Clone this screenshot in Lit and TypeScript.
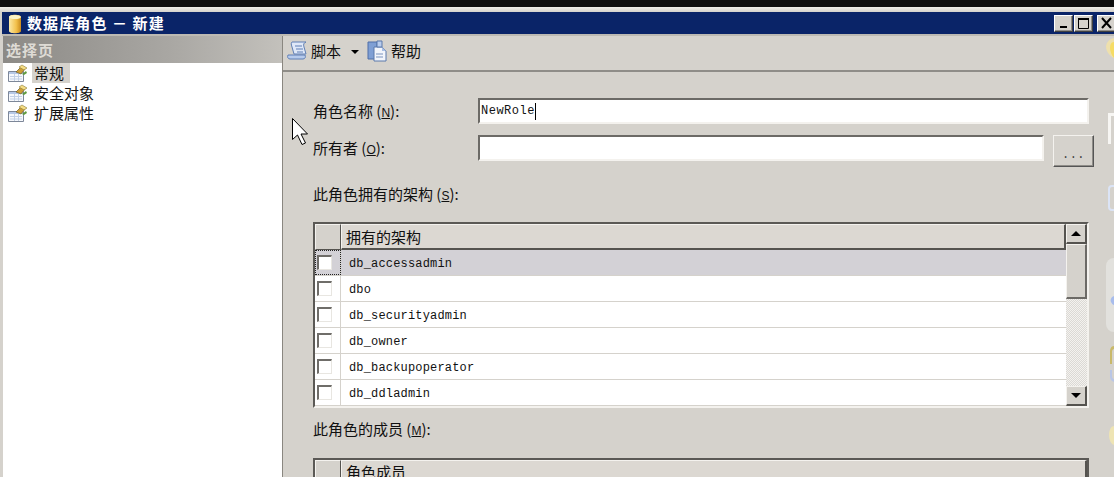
import { LitElement, html, css } from "lit";
import { customElement } from "lit/decorators.js";

const pageIcon = html`<svg class="pico" width="21" height="19" viewBox="0 0 21 19">
  <path d="M1.500 7.500h15v10h-15z" fill="#f6f8fc" stroke="#7d8798"/>
  <path d="M2 8h14v2H2z" fill="#b6c8e6"/>
  <path d="M3 12.500h12M3 15h12M7.500 10v7M11.500 10v7" stroke="#c3d1e6" fill="none"/>
  <path d="M9 8l5-5 4 2-4 5z" fill="#cf9f35" stroke="#6f5e28" stroke-width=".7"/>
  <path d="M12 3l3-2 5 3-3 2z" fill="#f4dc85" stroke="#8c7a35" stroke-width=".6"/>
  <path d="M15 10l4-3 1 2-3 2z" fill="#5f9b3f"/>
</svg>`;

const schemas = ["db_accessadmin", "dbo", "db_securityadmin", "db_owner", "db_backupoperator", "db_ddladmin"];

@customElement("app-root")
export class AppRoot extends LitElement {
  static styles = css`
    :host { display: block; width: 1114px; height: 477px; overflow: hidden; position: relative; background: #d5d2cc;
      font-family: "Noto Sans CJK SC", "Liberation Sans", sans-serif; font-size: 15px; color: #111; }
    .black { height: 7px; background: #0f0f0f; }
    .frame { height: 5px; background: linear-gradient(#f0eee9, #d5d2cc); }
    .title { height: 22px; margin-left: 2px; background: #0a2468; color: #fff; font-weight: 700; display: flex; align-items: center; font-size: 15px; gap: 4px; padding-left: 5px; }
    .title .t { flex: 1; white-space: pre; line-height: 22px; letter-spacing: 1.1px; }
    .winbtns { display: flex; }
    .wb { width: 19px; height: 17px; box-sizing: border-box; background: #d5d2cc; border: 1px solid; border-color: #fff #404040 #404040 #fff; box-shadow: inset -1px -1px 0 #8f8d88; display: flex; align-items: center; justify-content: center; margin-right: 1px; }
    .wb.x { margin-left: 3px; margin-right: -2px; }
    .rule { height: 2px; background: #bdbab3; margin-left: 2px; }
    .main { display: flex; height: 441px; }
    .left { width: 283px; flex: none; background: #fff; box-sizing: border-box; border-left: 3px solid #d5d2cc; border-right: 1px solid #8a8780; display: flex; flex-direction: column; }
    .lhead { height: 27px; flex: none; background: linear-gradient(90deg, #8c8a86, #a9a7a3 60%, #c3c1bc); color: #dedbd5; font-weight: 700; display: flex; align-items: center; padding-left: 3px; font-size: 15px; letter-spacing: 1px; }
    .pages { display: flex; flex-direction: column; }
    .pg { display: flex; align-items: center; height: 20px; padding-left: 4px; gap: 5px; line-height: 20px; font-size: 15px; }
    .pg span { padding: 0 6px 0 2px; margin-left: -1px; }
    .pg.sel span { background: #d5d2cc; }
    .right { flex: 1; min-width: 0; display: flex; flex-direction: column; }
    .tb { height: 36px; flex: none; box-sizing: border-box; border-bottom: 2px solid #8f8d88; padding-bottom: 5px; display: flex; align-items: center; padding-left: 4px; font-size: 15px; }
    .tb .ic { display: flex; align-items: center; gap: 3px; }
    .caret { width: 0; height: 0; border: 4px solid transparent; border-top: 4px solid #000; border-bottom: 0; margin: 2px 8px 0 10px; }
    .form { padding: 26px 20px 0 30px; flex: none; }
    .row { display: flex; align-items: flex-start; height: 26px; }
    .row label { width: 165px; flex: none; line-height: 26px; white-space: pre; }
    .u { text-decoration: underline; font-family: "Liberation Sans", sans-serif; font-size: 12px; }
    .inp { height: 26px; box-sizing: border-box; background: #fff; border: 2px solid; border-color: #6c6a66 #f4f2ee #f4f2ee #6c6a66; font-family: "Liberation Mono", monospace; font-size: 12px; letter-spacing: .5px; padding-left: 1px; display: flex; align-items: center; }
    .inp i { display: inline-block; width: 1px; height: 17px; background: #000; }
    .r1 .inp { width: 611px; }
    .r2 { margin-top: 11px; }
    .r2 .inp { width: 566px; }
    .dots { width: 41px; height: 32px; flex: none; box-sizing: border-box; margin-left: 9px; background: #d5d2cc; border: 1px solid; border-color: #f4f2ee #555 #555 #f4f2ee; box-shadow: inset -1px -1px 0 #8f8d88; text-align: center; font: 12px/38px "Liberation Mono", monospace; letter-spacing: .4px; color: #444; }
    .sec { margin-top: 20px; line-height: 26px; height: 26px; white-space: pre; }
    .grid { margin-top: 15px; width: 776px; box-sizing: border-box; border: 2px solid; border-color: #5b5955 #f4f2ee #f4f2ee #5b5955; display: flex; }
    .gmain { flex: 1; min-width: 0; }
    .ghead { display: flex; height: 26px; box-sizing: border-box; }
    .hc { box-sizing: border-box; border: 1px solid; border-color: #f4f2ee #55534f #55534f #f4f2ee; background: #d5d2cc; line-height: 23px; font-size: 15px; overflow: hidden; }
    .hc.a { width: 26px; flex: none; }
    .hc.b { flex: 1; padding-left: 4px; background: #dcd8d2; border-width: 1px 2px 2px 1px; }
    .grow { display: flex; height: 26px; box-sizing: border-box; background: #fff; border-bottom: 1px solid #d5d2cc; }
    .grow.sel { background: #d3d1d6; }
    .cc { width: 26px; flex: none; box-sizing: border-box; border-right: 1px solid #d5d2cc; display: flex; align-items: center; padding-left: 2px; }
    .grow.sel .cc { outline: 1px dotted #222; outline-offset: -1px; }
    .cb { width: 15px; height: 15px; box-sizing: border-box; background: #fff; border: 1px solid; border-width: 2px 1px 1px 2px; border-color: #6f6d69 #e8e6e1 #e8e6e1 #6f6d69; }
    .cn { font: 12px/28px "Liberation Mono", monospace; letter-spacing: .17px; padding-left: 8px; }
    .sb { width: 21px; flex: none; display: flex; flex-direction: column; background: repeating-conic-gradient(#dbd9d5 0 25%, #f4f2ef 0 50%) 0 0 / 2px 2px; }
    .sbtn { width: 21px; height: 20px; flex: none; box-sizing: border-box; background: #d5d2cc; border: 1px solid; border-width: 1px 2px 2px 1px; border-color: #f4f2ee #55534f #55534f #f4f2ee; display: flex; align-items: center; justify-content: center; }
    .thumb { width: 21px; height: 55px; flex: none; box-sizing: border-box; background: #d5d2cc; border: 1px solid; border-width: 1px 2px 2px 1px; border-color: #f4f2ee #6c6a66 #6c6a66 #f4f2ee; }
    .sp { flex: 1; }
    .up { width: 0; height: 0; border: 5px solid transparent; border-bottom: 5px solid #000; border-top: 0; }
    .dn { width: 0; height: 0; border: 5px solid transparent; border-top: 5px solid #000; border-bottom: 0; }
    .sec2 { margin-top: 8px; }
    .grid2 { margin-top: 16px; border-bottom: 0; border-right-color: #5b5955; }
    .grid2 .hc { line-height: 21px; }
    .cursor { position: absolute; left: 292px; top: 118px; }
    .edge { position: absolute; left: 1096px; top: 34px; }
  `;

  render() {
    return html`
      <div class="black"></div>
      <div class="frame"></div>
      <div class="title">
        <svg width="16" height="21" viewBox="0 0 16 21">
          <defs><linearGradient id="g" x1="0" x2="1"><stop offset="0" stop-color="#fbe9a8"/><stop offset=".6" stop-color="#f3c14c"/><stop offset="1" stop-color="#c98a1c"/></linearGradient></defs>
          <path d="M2 4c0-3 12-3 12 0v14c0 3-12 3-12 0z" fill="url(#g)"/>
          <ellipse cx="8" cy="4" rx="6" ry="2" fill="#fdf3c6"/>
        </svg>
        <span class="t">数据库角色 － 新建</span>
        <div class="winbtns">
          <div class="wb"><svg width="11" height="11" viewBox="0 0 11 11"><path d="M2 8h7v2H2z"/></svg></div>
          <div class="wb"><svg width="13" height="13" viewBox="0 0 13 13"><path d="M1.500 2.500h10v9h-10z" fill="none" stroke="#000"/><path d="M1 1h11v2H1z"/></svg></div>
          <div class="wb x"><svg width="13" height="12" viewBox="0 0 13 12"><path d="M2 1l9 10M11 1L2 11" stroke="#000" stroke-width="2"/></svg></div>
        </div>
      </div>
      <div class="rule"></div>
      <div class="main">
        <div class="left">
          <div class="lhead">选择页</div>
          <div class="pages">
            <div class="pg sel">${pageIcon}<span>常规</span></div>
            <div class="pg">${pageIcon}<span>安全对象</span></div>
            <div class="pg">${pageIcon}<span>扩展属性</span></div>
          </div>
        </div>
        <div class="right">
          <div class="tb">
            <span class="ic">
              <svg width="21" height="21" viewBox="0 0 21 21"><path d="M5 2h14c-2 1-3 2-2 5l2 7H7L5 7C4 4 4 3 5 2z" fill="#dfe8f8" stroke="#5f7fb5"/><path d="M1 15h17c1 2 0 4-2 4H3c-2 0-3-2-2-4z" fill="#b7cbec" stroke="#5f7fb5"/><path d="M8 6h7M9 9h7M10 12h6" stroke="#5f7fb5"/></svg>
              脚本
            </span>
            <span class="caret"></span>
            <span class="ic">
              <svg width="21" height="22" viewBox="0 0 21 22"><path d="M1 2h9v17H1z" fill="#7f9fd4" stroke="#4f6fa8"/><path d="M7 7h8l4 4v10H7z" fill="#f2f5fb" stroke="#5a78ab"/><path d="M15 7v4h4z" fill="#a9bfe3"/><path d="M10 1h5v6h-5z" fill="#b9cdee" stroke="#5a78ab"/><path d="M9 14h7M9 17h7" stroke="#7b93bd"/></svg>
              帮助
            </span>
          </div>
          <div class="form">
            <div class="row r1"><label>角色名称 (<span class="u">N</span>):</label><div class="inp">NewRole<i></i></div></div>
            <div class="row r2"><label>所有者 (<span class="u">O</span>):</label><div class="inp"></div><div class="dots">...</div></div>
            <div class="sec">此角色拥有的架构 (<span class="u">S</span>):</div>
            <div class="grid">
              <div class="gmain">
                <div class="ghead"><div class="hc a"></div><div class="hc b">拥有的架构</div></div>
                ${schemas.map((s, i) => html`<div class="grow ${i === 0 ? "sel" : ""}"><div class="cc"><div class="cb"></div></div><div class="cn">${s}</div></div>`)}
              </div>
              <div class="sb">
                <div class="sbtn"><div class="up"></div></div>
                <div class="thumb"></div>
                <div class="sp"></div>
                <div class="sbtn"><div class="dn"></div></div>
              </div>
            </div>
            <div class="sec sec2">此角色的成员 (<span class="u">M</span>):</div>
            <div class="grid grid2">
              <div class="gmain"><div class="ghead"><div class="hc a"></div><div class="hc b">角色成员</div></div></div>
            </div>
          </div>
        </div>
      </div>
      <svg class="cursor" width="16" height="29" viewBox="0 0 16 29"><path d="M.5.500v21l5-4.500 4.500 9.500 3.500-1.500-4.500-9h6.500z" fill="#fff" stroke="#000"/></svg>
      <svg class="edge" width="18" height="443" viewBox="0 0 18 443">
        <path d="M18 4a10 10 0 0 0-8 8c0 6 4 10 8 12z" fill="#eee0ac"/>
        <path d="M18 8c-3 0-4 3-4 6 0 3 2 8 4 10z" fill="#f6dc64"/>
        <path d="M12 79h6v3h-3v28h-3z" fill="#f7f6f3"/>
        <rect x="13" y="152" width="8" height="24" rx="3" fill="none" stroke="#dbe4f6" stroke-width="2"/>
        <path d="M18 224a8 8 0 0 0-8 8v58a8 8 0 0 0 8 8z" fill="#e2e1dd"/>
        <path d="M18 262c-3 1-4 4-3 6s2 3 3 3z" fill="#a7bcec"/>
        <path d="M18 312c-3 0-4 3-4 6v12h2v-12c0-2 1-3 2-3z" fill="#c9b96a"/>
        <path d="M14 336v6c0 4 2 5 4 6v-3c-1 0-2-1-2-3v-6z" fill="#b9c6e6"/>
        <path d="M18 392c-3 0-5 4-5 9s2 9 5 10z" fill="#eee4b4"/>
      </svg>
    `;
  }
}
